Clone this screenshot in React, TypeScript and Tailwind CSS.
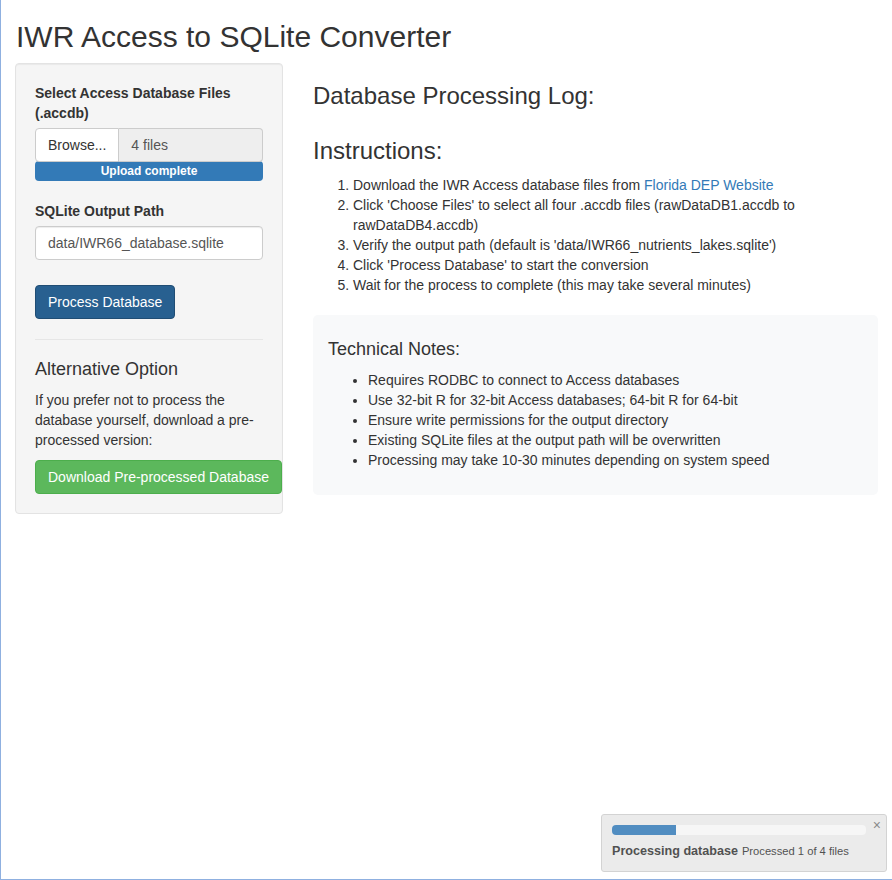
import React from 'react';

const steps = [
  "Click 'Choose Files' to select all four .accdb files (rawDataDB1.accdb to rawDataDB4.accdb)",
  "Verify the output path (default is 'data/IWR66_nutrients_lakes.sqlite')",
  "Click 'Process Database' to start the conversion",
  "Wait for the process to complete (this may take several minutes)",
];

const notes = [
  "Requires RODBC to connect to Access databases",
  "Use 32-bit R for 32-bit Access databases; 64-bit R for 64-bit",
  "Ensure write permissions for the output directory",
  "Existing SQLite files at the output path will be overwritten",
  "Processing may take 10-30 minutes depending on system speed",
];

function Sidebar() {
  return (
    <div className="rounded border border-[#e3e3e3] bg-[#f5f5f5] p-[19px] shadow-[inset_0_1px_1px_rgba(0,0,0,0.05)]">
      <div className="mb-5">
        <label className="mb-[5px] block font-bold">Select Access Database Files (.accdb)</label>
        <div className="flex h-[34px]">
          <span className="flex items-center rounded-l border border-[#ccc] bg-white px-3">Browse...</span>
          <div className="flex flex-1 items-center rounded-r border border-l-0 border-[#ccc] bg-[#eee] px-3 text-[#555]">
            4 files
          </div>
        </div>
        <div className="-mt-px h-5 rounded bg-[#337ab7] text-center text-[12px] font-bold leading-5 text-white">
          Upload complete
        </div>
      </div>

      <label className="mb-[5px] block font-bold">SQLite Output Path</label>
      <div className="flex h-[34px] items-center rounded border border-[#ccc] bg-white px-3 text-[#555] shadow-[inset_0_1px_1px_rgba(0,0,0,0.075)]">
        data/IWR66_database.sqlite
      </div>

      <button className="mt-[25px] h-[34px] rounded border border-[#204d74] bg-[#286090] px-3 text-white">
        Process Database
      </button>

      <hr className="my-5 border-t border-[#e6e6e6]" />

      <h4 className="mb-2.5 text-[18px] leading-[19.8px]">Alternative Option</h4>
      <p className="mb-2.5">If you prefer not to process the database yourself, download a pre-processed version:</p>
      <button className="h-[34px] whitespace-nowrap rounded border border-[#4cae4c] bg-[#5cb85c] px-3 text-white">
        Download Pre-processed Database
      </button>
    </div>
  );
}

function MainPanel() {
  return (
    <div>
      <h3 className="mt-5 text-[24px] leading-[26.4px]">Database Processing Log:</h3>
      <h3 className="mt-[29px] mb-2.5 text-[24px] leading-[26.4px]">Instructions:</h3>
      <ol className="mb-2.5 list-decimal pl-10">
        <li>
          Download the IWR Access database files from{' '}
          <a href="#" className="text-[#337ab7]">Florida DEP Website</a>
        </li>
        {steps.map((s) => (
          <li key={s}>{s}</li>
        ))}
      </ol>
      <div className="mt-5 rounded-[5px] bg-[#f8f9fa] p-[15px]">
        <h4 className="my-2.5 text-[18px] leading-[19.8px]">Technical Notes:</h4>
        <ul className="mb-2.5 list-disc pl-10">
          {notes.map((n) => (
            <li key={n}>{n}</li>
          ))}
        </ul>
      </div>
    </div>
  );
}

export default function App() {
  return (
    <div className="relative h-[880px] border-b border-[#8fb0e0] bg-white font-['Liberation_Sans',Arial,sans-serif] text-[14px] leading-5 text-[#333]">
      {/* window frame edge */}
      <div className="pointer-events-none absolute inset-y-0 left-0 w-px bg-[#8fb0e0]" />

      <div className="px-[15px] pt-5">
        <h2 className="mb-2.5 pl-px text-[30px] leading-[33px]">IWR Access to SQLite Converter</h2>
        <div className="-mx-[15px] flex">
          <div className="w-[298px] shrink-0 px-[15px]">
            <Sidebar />
          </div>
          <div className="min-w-0 flex-1 pl-[15px] pr-[14px]">
            <MainPanel />
          </div>
        </div>
      </div>

      <div className="absolute bottom-[7px] right-[5px] w-[286px] rounded-[3px] border border-[#ccc] bg-[#e8e8e8] py-[10px] pl-[10px] pr-[20px] opacity-85">
        <span className="absolute right-[5px] top-[2px] text-[14px] leading-4 text-[#777]">×</span>
        <div className="h-[10px] overflow-hidden rounded bg-[#f5f5f5]">
          <div className="h-full bg-[#337ab7]" style={{ width: '25%' }} />
        </div>
        <div className="mt-[5px] leading-5">
          <span className="text-[12.6px] font-bold">Processing database</span>{' '}
          <span className="text-[11.2px]">Processed 1 of 4 files</span>
        </div>
      </div>
    </div>
  );
}
